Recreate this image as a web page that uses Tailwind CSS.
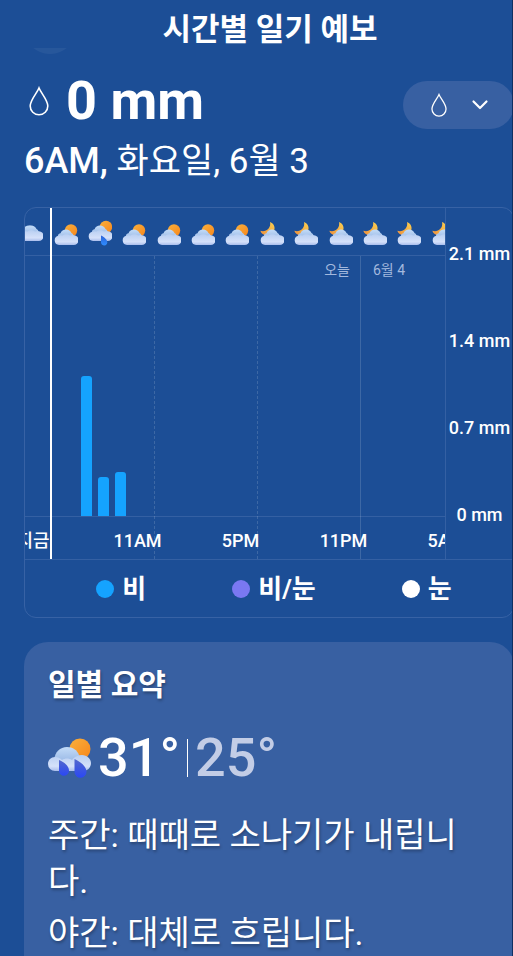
<!DOCTYPE html>
<html lang="ko">
<head>
    <meta charset="UTF-8">
    <meta name="viewport" content="width=device-width, initial-scale=1.0">
    <title>시간별 일기 예보</title>
    <script src="https://cdn.jsdelivr.net/npm/@tailwindcss/browser@4"></script>
</head>
<body class="min-h-screen bg-[#1c4e96] border-r border-[#0f2f62] text-white font-['Roboto','Noto_Sans_CJK_KR',sans-serif] overflow-x-hidden">

    <!-- Shared icon shapes -->
    <svg class="absolute w-0 h-0" aria-hidden="true">
        <defs>
            <linearGradient id="sun" x1="0" y1="0" x2="1" y2="1">
                <stop offset="0" stop-color="#f9b03c"/>
                <stop offset="1" stop-color="#f7861c"/>
            </linearGradient>
            <linearGradient id="moon" x1="0" y1="1" x2="1" y2="0">
                <stop offset="0" stop-color="#ee8f3c"/>
                <stop offset="1" stop-color="#fbd050"/>
            </linearGradient>
            <linearGradient id="back" x1="0" y1="0" x2="0" y2="1">
                <stop offset="0" stop-color="#c3dcf8"/>
                <stop offset="1" stop-color="#8eaee0"/>
            </linearGradient>
            <linearGradient id="front" x1="0" y1="0" x2="0" y2="1">
                <stop offset="0" stop-color="#b9cff2"/>
                <stop offset="0.7" stop-color="#d5e1fa"/>
                <stop offset="1" stop-color="#a9bdec"/>
            </linearGradient>
            <linearGradient id="rain" x1="0" y1="0" x2="0" y2="1">
                <stop offset="0" stop-color="#2c62d8"/>
                <stop offset="1" stop-color="#2f8dff"/>
            </linearGradient>
            <linearGradient id="bigrain" x1="0" y1="0" x2="0" y2="1">
                <stop offset="0" stop-color="#5468cc"/>
                <stop offset="1" stop-color="#2a48f4"/>
            </linearGradient>
            <g id="cloud">
                <path fill="url(#back)" d="M4 22.500a3.500 3.500 0 0 1 2.500-4.300A6 6 0 0 1 17.500 18a4 4 0 0 1 1.500 6L8 26z"/>
                <path fill="url(#front)" d="M5 30a4.700 4.700 0 0 1-.5-9.300 6 6 0 0 1 4-.2 6.500 6.500 0 0 1 7.500 0 5.500 5.500 0 0 1 4-.3A4.900 4.900 0 0 1 19.500 30z"/>
            </g>
            <symbol id="day" viewBox="0 0 24 32">
                <circle cx="17" cy="15.500" r="6.200" fill="url(#sun)"/>
                <use href="#cloud"/>
            </symbol>
            <symbol id="night" viewBox="0 0 24 32">
                <path fill="url(#moon)" d="M10 7c4 1.500 5.500 5.500 4 9-1.800 4-6 5.500-9.500 4C1.800 19 .6 17 .4 15.800c3 .8 6 .2 8-2 1.600-1.800 2.200-4.300 1.600-6.800z"/>
                <use href="#cloud"/>
            </symbol>
            <symbol id="shower" viewBox="0 0 24 32">
                <circle cx="18" cy="12" r="6.200" fill="url(#sun)"/>
                <use href="#cloud" y="-4"/>
                <path fill="url(#rain)" d="M13 20.500c3 1.500 6.300 4 6.300 7a3.200 3.200 0 0 1-6.300.5z"/>
            </symbol>
            <symbol id="overcast" viewBox="0 0 24 32">
                <path fill="url(#back)" d="M0 16a6 6 0 0 1 5-3.500 8 8 0 0 1 10 0 6 6 0 0 1 3 5L8 22z"/>
                <use href="#cloud" y="-4"/>
            </symbol>
            <symbol id="drop" viewBox="0 0 20 30">
                <path fill="none" stroke="currentColor" stroke-width="1.600" stroke-linejoin="miter" d="M10 2C8 7 1.200 14 1.200 20a8.800 8.800 0 0 0 17.600 0C18.800 14 12 7 10 2z"/>
            </symbol>
        </defs>
    </svg>

    <header class="h-14 flex items-center justify-center pl-7 pt-1 relative">
        <h1 class="text-[31px] leading-10 font-bold">시간별 일기 예보</h1>
        <div class="absolute left-6 top-12 w-[52px] h-[7px] overflow-hidden">
            <div class="w-[52px] h-[52px] -mt-[46px] rounded-full bg-white/5"></div>
        </div>
    </header>

    <main class="pl-6 pt-[17px] -mr-[2px]">
        <div class="flex items-end justify-between">
            <h2 class="flex items-center text-[54px] leading-14 font-bold">
                <svg class="w-5 h-[30px] ml-[5px] mr-[17px]"><use href="#drop"/></svg>
                0 mm
            </h2>
            <button type="button" aria-label="강수량" class="w-[111px] h-12 rounded-full bg-[#3860a2] flex items-center pl-7 gap-6">
                <svg class="w-4 h-6"><use href="#drop"/></svg>
                <svg class="w-[18px] h-3" viewBox="0 0 18 12" fill="none" stroke="currentColor" stroke-width="2.200" stroke-linecap="round" stroke-linejoin="round"><path d="M2.500 2.500L9 9l6.500-6.500"/></svg>
            </button>
        </div>
        <p class="mt-[10px] text-[35px] leading-11"><span class="text-[36px] font-medium">6AM,</span> 화요일, 6월 3</p>

        <!-- Hourly precipitation chart -->
        <section class="mt-[23px] border border-[#3762a5] rounded-xl overflow-hidden">
            <div class="flex h-[351px]">
                <div class="relative flex-1 overflow-hidden flex flex-col">
                    <div class="h-12 border-b border-[#3460a3]">
                        <div class="grid grid-cols-13 w-[447px] -ml-[11px] pt-[7px] justify-items-center">
                            <svg class="w-6 h-8"><use href="#overcast"/></svg>
                            <svg class="w-6 h-8"><use href="#day"/></svg>
                            <svg class="w-6 h-8"><use href="#shower"/></svg>
                            <svg class="w-6 h-8"><use href="#day"/></svg>
                            <svg class="w-6 h-8"><use href="#day"/></svg>
                            <svg class="w-6 h-8"><use href="#day"/></svg>
                            <svg class="w-6 h-8"><use href="#day"/></svg>
                            <svg class="w-6 h-8"><use href="#night"/></svg>
                            <svg class="w-6 h-8"><use href="#night"/></svg>
                            <svg class="w-6 h-8"><use href="#night"/></svg>
                            <svg class="w-6 h-8"><use href="#night"/></svg>
                            <svg class="w-6 h-8"><use href="#night"/></svg>
                            <svg class="w-6 h-8"><use href="#night"/></svg>
                        </div>
                    </div>
                    <div class="flex-1 border-b border-[#3460a3] flex flex-col justify-between">
                        <div class="flex gap-[23px] text-sm leading-7 text-[#a3b9de]">
                            <span class="w-[325px] text-right">오늘</span>
                            <span>6월 4</span>
                        </div>
                        <div class="flex items-end gap-[6px] pl-14">
                            <div class="w-[11px] rounded-t-[3px] bg-[#15a3ff]" style="height:140px"></div>
                            <div class="w-[11px] rounded-t-[3px] bg-[#15a3ff]" style="height:39px"></div>
                            <div class="w-[11px] rounded-t-[3px] bg-[#15a3ff]" style="height:44px"></div>
                        </div>
                    </div>
                    <div class="h-[42px] grid grid-cols-5 w-[515px] -ml-[42px] text-center text-[18px] leading-12 font-medium">
                        <span class="-ml-[3px]">지금</span>
                        <span>11AM</span>
                        <span>5PM</span>
                        <span>11PM</span>
                        <span>5AM</span>
                    </div>
                    <!-- Cursor and time rules -->
                    <div class="absolute inset-0 flex">
                        <div class="w-[27px] border-r-2 border-white"></div>
                        <div class="w-[103px] mt-12 border-r border-dashed border-white/15"></div>
                        <div class="w-[103px] mt-12 border-r border-dashed border-white/15"></div>
                        <div class="w-[103px] mt-12 border-r border-white/15"></div>
                    </div>
                </div>
                <div class="w-[68px] border-l border-[#3460a3] pt-[2px] text-center text-[18px] leading-[87px] font-medium">
                    <p>2.1 mm</p>
                    <p>1.4 mm</p>
                    <p>0.7 mm</p>
                    <p>0 mm</p>
                </div>
            </div>
            <div class="border-t border-[#3460a3] h-[58px] pl-[10px] flex items-center justify-center gap-[86px] text-[26px] leading-8 font-bold">
                <span class="flex items-center gap-2"><i class="size-[18px] rounded-full bg-[#15a3ff]"></i>비</span>
                <span class="flex items-center gap-2"><i class="size-[18px] rounded-full bg-[#7a78f2]"></i>비/눈</span>
                <span class="flex items-center gap-2"><i class="size-[18px] rounded-full bg-white"></i>눈</span>
            </div>
        </section>

        <!-- Daily summary -->
        <section class="mt-6 bg-[#3860a2] rounded-t-3xl px-6 pt-[27px] pb-10 [text-shadow:1px_2px_3px_rgba(0,0,0,0.3)]">
            <h3 class="text-[30px] leading-8 font-bold">일별 요약</h3>
            <div class="mt-[27px] flex items-center text-[54px] leading-[60px] font-medium [text-shadow:none]">
                <svg class="w-[43px] h-10 mr-[7px]" viewBox="0 0 43 40">
                    <circle cx="32" cy="11" r="10.500" fill="url(#sun)"/>
                    <path fill="url(#back)" d="M6 22C7 14 12 9 19 9c6 0 10 3 12 8l4 11H8z"/>
                    <path fill="url(#front)" d="M7 33a7 7 0 0 1-7-7c0-4 3-7 7-7 3 0 5 1 7 3 3-2 7-2 10 0 2-3 6-5 10-5 5 0 9 4 9 8 0 5-4 8-8 8z"/>
                    <path fill="url(#bigrain)" d="M11 22c5 2 10 6 10 10.500a5 5 0 0 1-10 .5z"/>
                    <path fill="url(#bigrain)" d="M26.500 21c6 3 12 7.500 12 12.500a6 6 0 0 1-12 .5z"/>
                </svg>
                <span>31°</span>
                <span class="w-px h-[38px] bg-white ml-[7px] mr-[7px]"></span>
                <span class="text-[#c3cde6]">25°</span>
            </div>
            <p class="mt-6 text-[34px] leading-[46px] break-all">주간: 때때로 소나기가 내립니다.</p>
            <p class="mt-[6px] text-[34px] leading-[46px] break-all">야간: 대체로 흐립니다.</p>
        </section>
    </main>
</body>
</html>
